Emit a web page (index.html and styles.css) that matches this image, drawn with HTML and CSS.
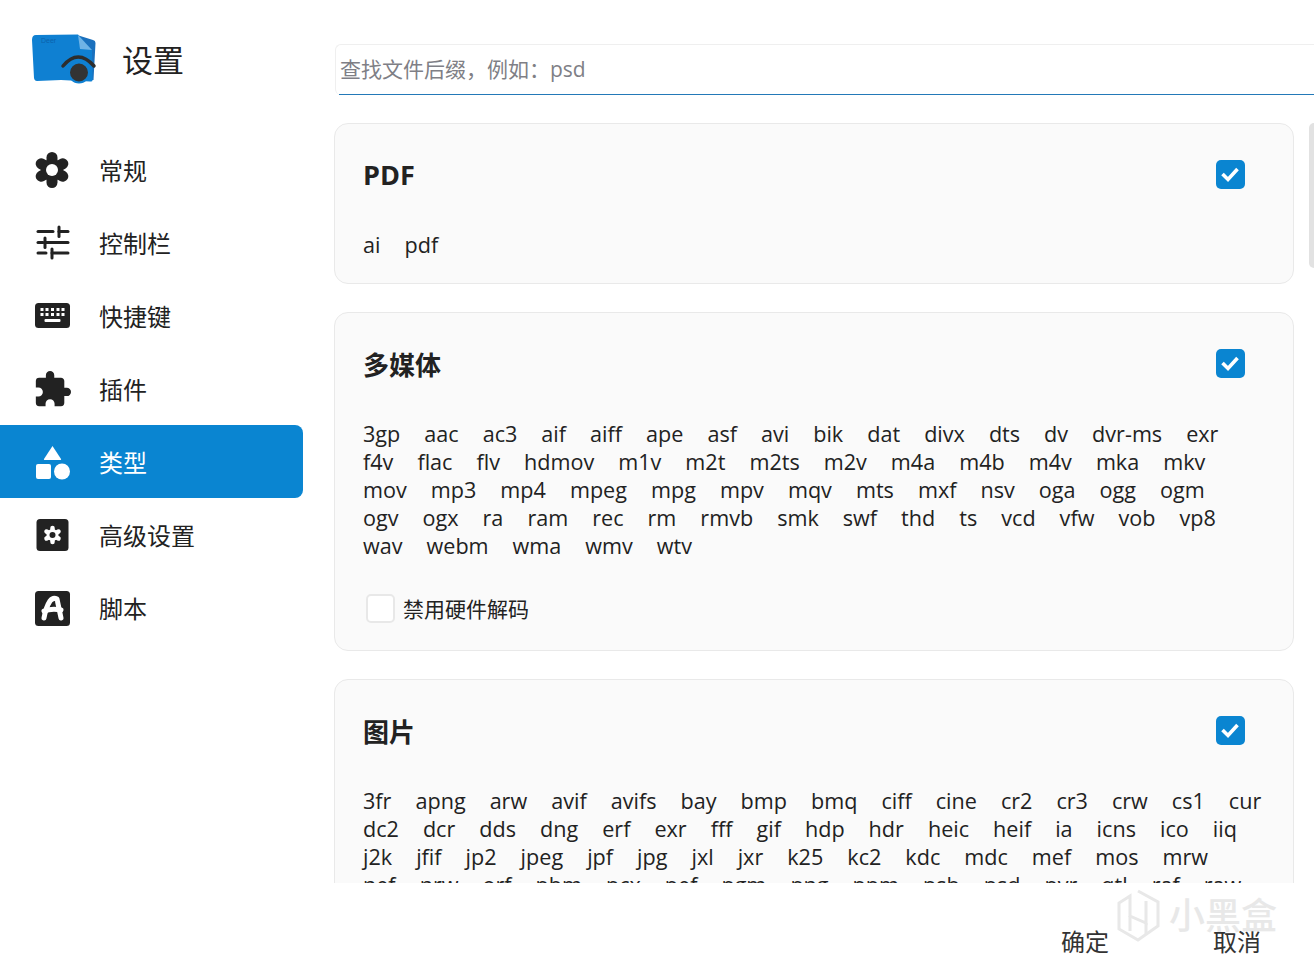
FILE: index.html
```html
<!DOCTYPE html>
<html lang="zh-CN">
<head>
<meta charset="utf-8">
<title>设置</title>
<link rel="stylesheet" href="styles.css">
</head>
<body>
<div class="app">
  <aside class="sidebar">
    <header class="brand">
      <svg class="logo" viewBox="0 0 66 50" width="66" height="50">
        <path d="M46 1 L62 6 Q64.500 6.500 64.500 9 L62.500 46 L50 47 Z" fill="#1a70bd"/>
        <path d="M1 6 Q1 1 5 1 L47 0.500 L61 16 L61.500 46 Q61.500 48 59 47.500 L30 46 L6 47 Q3.500 47 3 44 Z" fill="#0f80d2"/>
        <path d="M47 1 L61 16 L49 15 Z" fill="#6fb3e6"/>
        <text class="logo-text" x="10" y="9">Deer</text>
        <path d="M32 32 Q47 14 63 32" fill="none" stroke="#2d2d2d" stroke-width="3.500" stroke-linecap="round"/>
        <circle cx="48" cy="38.500" r="10" fill="#333" stroke="#0f80d2" stroke-width="2"/>
      </svg>
      <h1 class="brand-title">设置</h1>
    </header>
    <nav class="nav">
      <a class="nav-item">
        <svg class="nav-icon" viewBox="0 0 36 36"><g stroke="#222" stroke-width="11" stroke-linecap="round"><path d="M17 5.500 V30.500"/><path d="M6.200 11.700 L27.800 24.300"/><path d="M6.200 24.300 L27.800 11.700"/></g><circle cx="17" cy="18" r="11" fill="#222"/><circle cx="17" cy="18" r="6" fill="#fff"/></svg>
        <span>常规</span>
      </a>
      <a class="nav-item">
        <svg class="nav-icon" viewBox="0 0 36 36"><g stroke="#222" stroke-width="3" stroke-linecap="round" fill="none"><path d="M3 6.500 H18"/><path d="M24 2 V11.500"/><path d="M24 6.500 H33"/><path d="M3 17.500 H8"/><path d="M10 13 V22.500"/><path d="M10 17.500 H33"/><path d="M3 28 H11"/><path d="M17 24 V33"/><path d="M17 28 H33"/></g></svg>
        <span>控制栏</span>
      </a>
      <a class="nav-item">
        <svg class="nav-icon" viewBox="0 0 36 36"><rect x="0" y="5" width="35" height="25" rx="3.500" fill="#222"/><g fill="#fff"><rect x="5.500" y="10" width="3" height="3"/><rect x="10.500" y="10" width="3" height="3"/><rect x="16" y="10" width="3" height="3"/><rect x="21.500" y="10" width="3" height="3"/><rect x="26.500" y="10" width="3" height="3"/><rect x="5.500" y="15" width="3" height="3"/><rect x="10.500" y="15" width="3" height="3"/><rect x="16" y="15" width="3" height="3"/><rect x="21.500" y="15" width="3" height="3"/><rect x="26.500" y="15" width="3" height="3"/><rect x="9.500" y="21" width="16" height="3" rx="1"/></g></svg>
        <span>快捷键</span>
      </a>
      <a class="nav-item">
        <svg class="nav-icon" viewBox="1.500 1 21.500 21.500"><path fill="#222" d="M20.500,11H19V7C19,5.890 18.100,5 17,5H13V3.500A2.500,2.500 0 0,0 10.500,1A2.500,2.500 0 0,0 8,3.500V5H4A2,2 0 0,0 2,7V10.800H3.500C5,10.800 6.200,12 6.200,13.500C6.200,15 5,16.200 3.500,16.200H2V20A2,2 0 0,0 4,22H7.800V20.500C7.800,19 9,17.800 10.500,17.800C12,17.800 13.200,19 13.200,20.500V22H17A2,2 0 0,0 19,20V16H20.500A2.500,2.500 0 0,0 23,13.500A2.500,2.500 0 0,0 20.500,11Z"/></svg>
        <span>插件</span>
      </a>
      <a class="nav-item is-active">
        <svg class="nav-icon" viewBox="0 0 36 36"><g fill="#fff"><path d="M17.500 2 L26 15 Q26.500 16 25.500 16 H9.500 Q8.500 16 9 15 Z"/><rect x="1" y="20" width="15" height="15" rx="2"/><circle cx="27" cy="27.500" r="8"/></g></svg>
        <span>类型</span>
      </a>
      <a class="nav-item">
        <svg class="nav-icon" viewBox="0 0 36 36"><rect x="1.500" y="2" width="32" height="32" rx="3.500" fill="#222"/><g stroke="#fff" stroke-width="4.500" stroke-linecap="round"><path d="M17.500 11 V25"/><path d="M11.500 14.500 L23.500 21.500"/><path d="M11.500 21.500 L23.500 14.500"/></g><circle cx="17.500" cy="18" r="6" fill="#fff"/><circle cx="17.500" cy="18" r="3" fill="#222"/></svg>
        <span>高级设置</span>
      </a>
      <a class="nav-item">
        <svg class="nav-icon" viewBox="0 0 36 36"><rect x="0" y="1" width="35" height="35" rx="3.500" fill="#222"/><g fill="none" stroke="#fff" stroke-width="5" stroke-linecap="round" stroke-linejoin="round"><path d="M9 28 Q11 17 15 11 Q18 7 22 9 L26 28"/><path d="M9 21 Q17 18 26 20"/></g></svg>
        <span>脚本</span>
      </a>
    </nav>
  </aside>

  <main class="main">
    <div class="search">
      <input class="search-input" type="text" placeholder="查找文件后缀，例如：psd">
    </div>
    <div class="scroll">
      <div class="scrollbar"></div>

      <section class="card">
        <div class="card-head">
          <h2 class="card-title card-title-latin">PDF</h2>
          <span class="check is-on"><svg viewBox="0 0 29 29" width="29" height="29"><path d="M6.500 14 L12 19.500 L21.500 9" fill="none" stroke="#fff" stroke-width="3.600"/></svg></span>
        </div>
        <div class="exts">
          <div class="ext-row"><span>ai</span><span>pdf</span></div>
        </div>
      </section>

      <section class="card">
        <div class="card-head">
          <h2 class="card-title card-title-cjk">多媒体</h2>
          <span class="check is-on"><svg viewBox="0 0 29 29" width="29" height="29"><path d="M6.500 14 L12 19.500 L21.500 9" fill="none" stroke="#fff" stroke-width="3.600"/></svg></span>
        </div>
        <div class="exts">
          <div class="ext-row"><span>3gp</span><span>aac</span><span>ac3</span><span>aif</span><span>aiff</span><span>ape</span><span>asf</span><span>avi</span><span>bik</span><span>dat</span><span>divx</span><span>dts</span><span>dv</span><span>dvr-ms</span><span>exr</span></div>
          <div class="ext-row"><span>f4v</span><span>flac</span><span>flv</span><span>hdmov</span><span>m1v</span><span>m2t</span><span>m2ts</span><span>m2v</span><span>m4a</span><span>m4b</span><span>m4v</span><span>mka</span><span>mkv</span></div>
          <div class="ext-row"><span>mov</span><span>mp3</span><span>mp4</span><span>mpeg</span><span>mpg</span><span>mpv</span><span>mqv</span><span>mts</span><span>mxf</span><span>nsv</span><span>oga</span><span>ogg</span><span>ogm</span></div>
          <div class="ext-row"><span>ogv</span><span>ogx</span><span>ra</span><span>ram</span><span>rec</span><span>rm</span><span>rmvb</span><span>smk</span><span>swf</span><span>thd</span><span>ts</span><span>vcd</span><span>vfw</span><span>vob</span><span>vp8</span></div>
          <div class="ext-row"><span>wav</span><span>webm</span><span>wma</span><span>wmv</span><span>wtv</span></div>
        </div>
        <label class="option"><span class="check"></span><span>禁用硬件解码</span></label>
      </section>

      <section class="card">
        <div class="card-head">
          <h2 class="card-title card-title-cjk">图片</h2>
          <span class="check is-on"><svg viewBox="0 0 29 29" width="29" height="29"><path d="M6.500 14 L12 19.500 L21.500 9" fill="none" stroke="#fff" stroke-width="3.600"/></svg></span>
        </div>
        <div class="exts">
          <div class="ext-row"><span>3fr</span><span>apng</span><span>arw</span><span>avif</span><span>avifs</span><span>bay</span><span>bmp</span><span>bmq</span><span>ciff</span><span>cine</span><span>cr2</span><span>cr3</span><span>crw</span><span>cs1</span><span>cur</span></div>
          <div class="ext-row"><span>dc2</span><span>dcr</span><span>dds</span><span>dng</span><span>erf</span><span>exr</span><span>fff</span><span>gif</span><span>hdp</span><span>hdr</span><span>heic</span><span>heif</span><span>ia</span><span>icns</span><span>ico</span><span>iiq</span></div>
          <div class="ext-row"><span>j2k</span><span>jfif</span><span>jp2</span><span>jpeg</span><span>jpf</span><span>jpg</span><span>jxl</span><span>jxr</span><span>k25</span><span>kc2</span><span>kdc</span><span>mdc</span><span>mef</span><span>mos</span><span>mrw</span></div>
          <div class="ext-row"><span>nef</span><span>nrw</span><span>orf</span><span>pbm</span><span>pcx</span><span>pef</span><span>pgm</span><span>png</span><span>ppm</span><span>psb</span><span>psd</span><span>pvr</span><span>qtl</span><span>raf</span><span>raw</span></div>
        </div>
      </section>
    </div>
    <footer class="footer">
      <button class="btn" type="button">确定</button>
      <button class="btn" type="button">取消</button>
    </footer>
  </main>

  <div class="watermark">
    <svg viewBox="0 0 44 54" width="44" height="54"><g fill="none" stroke="#e8e8e8" stroke-width="3"><path d="M22 2 L42 13 V37 L22 51 L3 40 V14 L14 7 V27 L30 34 V12"/><path d="M14 27 V42 M30 34 V45"/></g></svg>
    <span class="watermark-text">小黑盒</span>
  </div>
</div>
</body>
</html>
```

FILE: styles.css
```css
* {
  box-sizing: border-box;
}

html,
body {
  margin: 0;
  padding: 0;
  background: #fff;
}

body {
  font-family: "Open Sans", "Noto Sans CJK SC", sans-serif;
  color: #222;
}

.app {
  position: relative;
  display: flex;
  width: 1314px;
  height: 965px;
  overflow: hidden;
}

/* sidebar */
.sidebar {
  flex: 0 0 303px;
  display: flex;
  flex-direction: column;
}

.brand {
  display: flex;
  align-items: center;
  height: 133px;
  padding: 0 0 16px 31px;
}

.logo {
  flex: none;
}

.logo-text {
  font-family: "Liberation Sans", sans-serif;
  font-size: 7px;
  fill: #0b63ad;
}

.brand-title {
  margin: 0 0 0 25px;
  font-family: "Noto Sans CJK SC", sans-serif;
  font-size: 31px;
  font-weight: 400;
  line-height: 1;
}

.nav {
  display: flex;
  flex-direction: column;
}

.nav-item {
  display: flex;
  align-items: center;
  gap: 28px;
  height: 73px;
  padding-left: 35px;
  border-radius: 0 8px 8px 0;
  font-family: "Noto Sans CJK SC", sans-serif;
  font-size: 24px;
  line-height: 1;
}

.nav-item.is-active {
  background: #0a85d1;
  color: #fff;
}

.nav-icon {
  flex: none;
  width: 36px;
  height: 36px;
}

/* main column */
.main {
  flex: 1;
  min-width: 0;
  display: flex;
  flex-direction: column;
}

.search {
  position: relative;
  flex: none;
  height: 51px;
  margin: 44px 0 28px 32px;
  width: 979px;
  border: 1px solid #efefef;
  border-right: 0;
  border-bottom: 0;
  border-radius: 6px 0 0 6px;
}

.search::after {
  content: "";
  position: absolute;
  left: 3px;
  right: 0;
  bottom: 0;
  height: 1px;
  background: #2379b8;
}

.search-input {
  display: block;
  width: 100%;
  height: 47px;
  padding: 0 0 0 4px;
  border: 0;
  outline: 0;
  background: transparent;
  font-family: "Open Sans", "Noto Sans CJK SC", sans-serif;
  font-size: 21px;
  color: #222;
}

.search-input::placeholder {
  color: #7f7f86;
  opacity: 1;
}

.scroll {
  position: relative;
  flex: none;
  height: 760px;
  padding: 0 20px 0 31px;
  overflow: hidden;
}

.scrollbar {
  position: absolute;
  top: 0;
  right: 0;
  width: 5px;
  height: 145px;
  border-radius: 5px 0 0 5px;
  background: #e2e2e2;
}

.card {
  margin-bottom: 28px;
  padding: 28px 28px 24px;
  border: 1px solid #e9e9e9;
  border-radius: 14px;
  background: #fafafa;
}

.card-head {
  display: flex;
  align-items: center;
  justify-content: space-between;
  height: 44px;
  padding-right: 20px;
  margin-bottom: 35px;
}

.card-title {
  margin: 0;
  font-size: 26px;
  font-weight: 600;
  line-height: 1;
}

.card-title-latin {
  font-size: 27px;
  font-weight: 700;
}

.card-title-cjk {
  padding-top: 3px;
}

.check {
  flex: none;
  display: block;
  width: 29px;
  height: 29px;
  border-radius: 5px;
  border: 2px solid #e8e8e8;
  background: #fff;
}

.check.is-on {
  border: 0;
  background: #0a85d1;
}

.check svg {
  display: block;
}

.exts {
  font-size: 21.600px;
  line-height: 28px;
}

.ext-row {
  display: flex;
  gap: 24px;
  height: 28px;
  white-space: nowrap;
}

.option {
  display: flex;
  align-items: center;
  gap: 8px;
  margin: 34px 0 3px 3px;
  font-family: "Noto Sans CJK SC", sans-serif;
  font-size: 21px;
  line-height: 29px;
}

/* footer */
.footer {
  flex: 1;
  display: flex;
  justify-content: flex-end;
  align-items: flex-start;
  gap: 104px;
  padding: 44px 53px 0 0;
  background: #fff;
}

.btn {
  padding: 0;
  border: 0;
  background: none;
  font-family: "Noto Sans CJK SC", sans-serif;
  font-size: 24px;
  line-height: 28px;
  color: #333;
}

/* watermark over the page corner */
.watermark {
  position: absolute;
  left: 1116px;
  top: 889px;
  display: flex;
  align-items: flex-start;
  gap: 9px;
  pointer-events: none;
}

.watermark-text {
  margin-top: 6px;
  font-family: "Noto Sans CJK SC", sans-serif;
  font-size: 36px;
  font-weight: 500;
  line-height: 1;
  color: #e8e8e8;
}
```
